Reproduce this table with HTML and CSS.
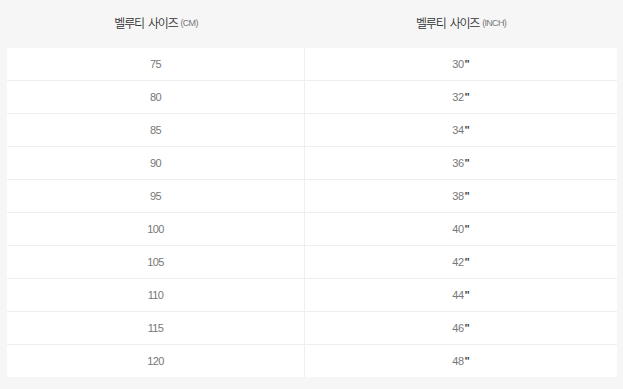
FILE: index.html
```html
<!DOCTYPE html>
<html lang="ko">
<head>
<meta charset="utf-8">
<link rel="stylesheet" href="styles.css">
</head>
<body>
<div class="page">
  <div class="head">
    <div class="hcell">벨루티 사이즈 <span class="unit">(CM)</span></div>
    <div class="hcell">벨루티 사이즈 <span class="unit">(INCH)</span></div>
  </div>
  <div class="table">
    <div class="row"><div class="cell">75</div><div class="cell">30<span class="q">"</span></div></div>
    <div class="row"><div class="cell">80</div><div class="cell">32<span class="q">"</span></div></div>
    <div class="row"><div class="cell">85</div><div class="cell">34<span class="q">"</span></div></div>
    <div class="row"><div class="cell">90</div><div class="cell">36<span class="q">"</span></div></div>
    <div class="row"><div class="cell">95</div><div class="cell">38<span class="q">"</span></div></div>
    <div class="row"><div class="cell">100</div><div class="cell">40<span class="q">"</span></div></div>
    <div class="row"><div class="cell">105</div><div class="cell">42<span class="q">"</span></div></div>
    <div class="row"><div class="cell">110</div><div class="cell">44<span class="q">"</span></div></div>
    <div class="row"><div class="cell">115</div><div class="cell">46<span class="q">"</span></div></div>
    <div class="row"><div class="cell">120</div><div class="cell">48<span class="q">"</span></div></div>
  </div>
</div>
</body>
</html>
```

FILE: styles.css
```css
html, body {
  margin: 0;
  padding: 0;
  background: #f6f6f6;
}
.page {
  width: 623px;
  height: 389px;
  padding: 0 6px 0 7px;
  box-sizing: border-box;
  font-family: "Liberation Sans", Arial, "Noto Sans CJK KR", sans-serif;
}
.head {
  display: grid;
  grid-template-columns: 298px 1fr;
  height: 48px;
}
.hcell {
  display: flex;
  align-items: center;
  justify-content: center;
  padding-bottom: 4px;
  box-sizing: border-box;
  font-family: "Noto Sans CJK KR", sans-serif;
  font-weight: 350;
  font-size: 12px;
  letter-spacing: -1.2px;
  word-spacing: 2px;
  color: #333;
}
.unit {
  font-family: "Liberation Sans", Arial, sans-serif;
  font-size: 9px;
  letter-spacing: -0.7px;
  word-spacing: 0;
  color: #777;
  margin-left: 3px;
  margin-top: 2px;
}
.table {
  background: #fff;
}
.row {
  display: grid;
  grid-template-columns: 298px 1fr;
  height: 32px;
  border-top: 1px solid #efefef;
}
.row:first-child {
  border-top: none;
}
.cell {
  display: flex;
  align-items: center;
  justify-content: center;
  font-size: 11px;
  letter-spacing: -0.6px;
  color: #777;
  padding-bottom: 1px;
  box-sizing: border-box;
}
.cell:first-child {
  border-right: 1px solid #efefef;
}
.q {
  font-weight: bold;
  color: #444;
  letter-spacing: 0;
  margin-left: 1px;
}
```
